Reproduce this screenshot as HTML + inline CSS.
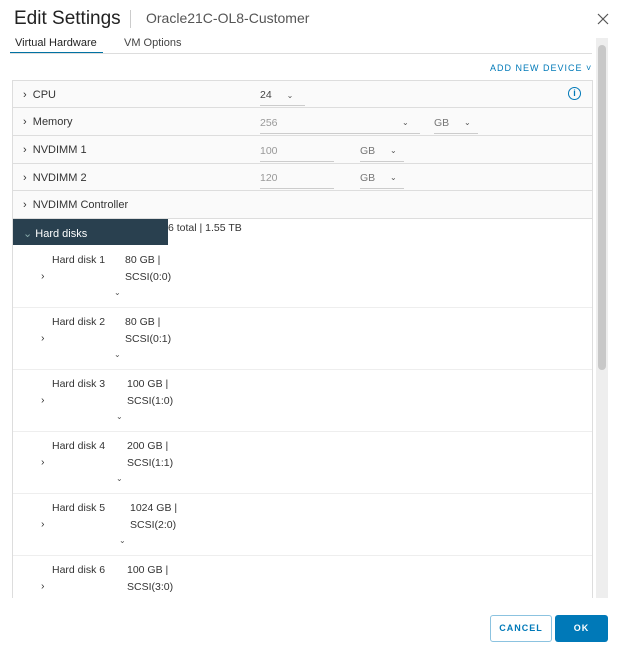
<!DOCTYPE html>
<html><head><style>
*{margin:0;padding:0;box-sizing:border-box}
body{width:624px;height:648px;background:#fff;font-family:"Liberation Sans",sans-serif;color:#333;position:relative;overflow:hidden}
.a{position:absolute;white-space:nowrap}
.row{position:absolute;left:13px;width:579px;background:#fafafa;border-bottom:1px solid #ddd;height:28px}
.row .l{position:absolute;left:10px;top:8px;font-size:11px;color:#333}
.in{position:absolute;border-bottom:1px solid #ccc;font-size:10.5px;color:#999;height:20px;padding-top:3px}
.car{font-size:8px;color:#555}
.hd{position:absolute;left:13px;width:579px;border-bottom:1px solid #eee;height:62px;font-size:10.5px;color:#333}
</style></head><body>
<div class="a" style="left:14px;top:8px;font-size:19px;color:#222">Edit Settings</div>
<div class="a" style="left:130px;top:10px;width:1px;height:18px;background:#ccc"></div>
<div class="a" style="left:146px;top:10px;font-size:14px;color:#555">Oracle21C-OL8-Customer</div>
<svg class="a" style="left:597px;top:13px" width="12" height="12"><path d="M1 1L11 11M11 1L1 11" stroke="#555" stroke-width="1.2"/></svg>
<div class="a" style="left:15px;top:37px;font-size:11px;color:#222">Virtual Hardware</div>
<div class="a" style="left:124px;top:37px;font-size:11px;color:#444">VM Options</div>
<div class="a" style="left:10px;top:52px;width:93px;height:2px;background:#0072a3"></div>
<div class="a" style="left:10px;top:53px;width:582px;height:1px;background:#ddd"></div>
<div class="a" style="left:490px;top:63px;font-size:9px;color:#0079b8;letter-spacing:1px">ADD NEW DEVICE ˅</div>
<div class="a" style="left:12px;top:80px;width:581px;height:518px;border:1px solid #ddd;border-bottom:none"></div>
<div class="row" style="top:81px;height:27px"><span class="l">›&nbsp;&nbsp;CPU</span></div>
<div class="in" style="left:260px;top:86px;width:45px;color:#444">24 <span class="car" style="margin-left:12px">⌄</span></div>
<div class="a" style="left:568px;top:87px;width:13px;height:13px;border:1.5px solid #0079b8;border-radius:50%;color:#0079b8;font-size:9px;text-align:center;line-height:10px;font-weight:bold">i</div>
<div class="row" style="top:108px"><span class="l">›&nbsp;&nbsp;Memory</span></div>
<div class="in" style="left:260px;top:114px;width:160px">256<span class="a car" style="left:142px;top:4px">⌄</span></div>
<div class="in" style="left:434px;top:114px;width:44px;color:#777">GB<span class="a car" style="left:30px;top:4px">⌄</span></div>
<div class="row" style="top:136px"><span class="l">›&nbsp;&nbsp;NVDIMM 1</span></div>
<div class="in" style="left:260px;top:142px;width:74px">100</div>
<div class="in" style="left:360px;top:142px;width:44px;color:#777">GB<span class="a car" style="left:30px;top:4px">⌄</span></div>
<div class="row" style="top:164px;height:27px"><span class="l">›&nbsp;&nbsp;NVDIMM 2</span></div>
<div class="in" style="left:260px;top:169px;width:74px">120</div>
<div class="in" style="left:360px;top:169px;width:44px;color:#777">GB<span class="a car" style="left:30px;top:4px">⌄</span></div>
<div class="row" style="top:191px;height:28px"><span class="l">›&nbsp;&nbsp;NVDIMM Controller</span></div>
<div class="a" style="left:13px;top:219px;width:155px;height:26px;background:#29404f;color:#fff;font-size:11px;padding:8px 0 0 10px"><span style="color:#8aa">⌄</span> Hard disks</div>
<div class="a" style="left:168px;top:222px;font-size:10.5px">6 total | 1.55 TB</div>
<div class="hd" style="top:246px"><span class="a" style="left:39px;top:8px">Hard disk 1</span><span class="a" style="left:112px;top:8px">80 GB |</span><span class="a" style="left:28px;top:24px">›</span><span class="a" style="left:112px;top:25px">SCSI(0:0)</span><span class="a car" style="left:101px;top:42px">⌄</span></div>
<div class="hd" style="top:308px"><span class="a" style="left:39px;top:8px">Hard disk 2</span><span class="a" style="left:112px;top:8px">80 GB |</span><span class="a" style="left:28px;top:24px">›</span><span class="a" style="left:112px;top:25px">SCSI(0:1)</span><span class="a car" style="left:101px;top:42px">⌄</span></div>
<div class="hd" style="top:370px"><span class="a" style="left:39px;top:8px">Hard disk 3</span><span class="a" style="left:114px;top:8px">100 GB |</span><span class="a" style="left:28px;top:24px">›</span><span class="a" style="left:114px;top:25px">SCSI(1:0)</span><span class="a car" style="left:103px;top:42px">⌄</span></div>
<div class="hd" style="top:432px"><span class="a" style="left:39px;top:8px">Hard disk 4</span><span class="a" style="left:114px;top:8px">200 GB |</span><span class="a" style="left:28px;top:24px">›</span><span class="a" style="left:114px;top:25px">SCSI(1:1)</span><span class="a car" style="left:103px;top:42px">⌄</span></div>
<div class="hd" style="top:494px"><span class="a" style="left:39px;top:8px">Hard disk 5</span><span class="a" style="left:117px;top:8px">1024 GB |</span><span class="a" style="left:28px;top:24px">›</span><span class="a" style="left:117px;top:25px">SCSI(2:0)</span><span class="a car" style="left:106px;top:42px">⌄</span></div>
<div class="hd" style="top:556px;border:none"><span class="a" style="left:39px;top:8px">Hard disk 6</span><span class="a" style="left:114px;top:8px">100 GB |</span><span class="a" style="left:28px;top:24px">›</span><span class="a" style="left:114px;top:25px">SCSI(3:0)</span></div>
<div class="a" style="left:592px;top:219px;width:1px;height:379px;background:#ddd"></div>
<div class="a" style="left:596px;top:38px;width:12px;height:560px;background:#eee"></div>
<div class="a" style="left:598px;top:45px;width:8px;height:325px;background:#c8c8c8;border-radius:4px"></div>
<div class="a" style="left:490px;top:615px;width:62px;height:27px;border:1px solid #8cc3e0;border-radius:3px;color:#0079b8;font-size:9px;letter-spacing:1px;text-align:center;line-height:25px;font-weight:bold">CANCEL</div>
<div class="a" style="left:555px;top:615px;width:53px;height:27px;background:#0079b8;border-radius:3px;color:#fff;font-size:9px;letter-spacing:1px;text-align:center;line-height:27px;font-weight:bold">OK</div>
</body></html>
